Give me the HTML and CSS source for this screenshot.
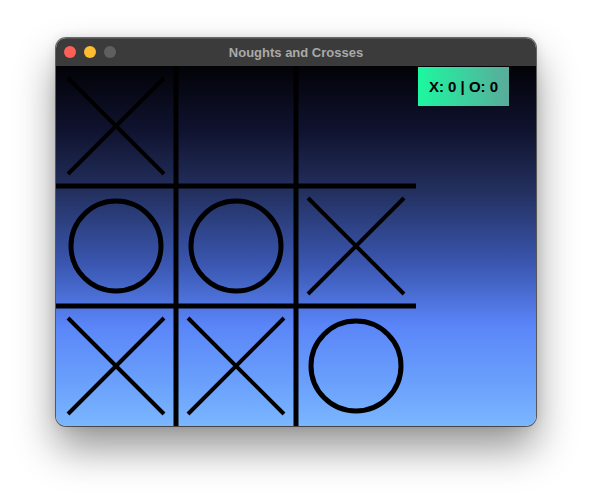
FILE: index.html
```html
<!DOCTYPE html>
<html>
<head>
<meta charset="utf-8">
<link rel="stylesheet" href="styles.css">
</head>
<body>
<div class="window">
  <div class="titlebar">
    <div class="lights">
      <span class="light red"></span>
      <span class="light yellow"></span>
      <span class="light gray"></span>
    </div>
    <div class="title">Noughts and Crosses</div>
  </div>
  <div class="content">
    <svg class="board" width="360" height="360" viewBox="0 0 360 360">
      <g stroke="#000" stroke-width="5">
        <line x1="120" y1="0" x2="120" y2="360"/>
        <line x1="240" y1="0" x2="240" y2="360"/>
        <line x1="0" y1="120" x2="361" y2="120"/>
        <line x1="0" y1="240" x2="361" y2="240"/>
      </g>
      <g stroke="#000" stroke-width="4" fill="none">
        <!-- row 0 -->
        <path d="M12 12 L108 108 M108 12 L12 108"/>
        <!-- row 1 -->
        <circle cx="60" cy="180" r="45" stroke-width="5"/>
        <circle cx="180" cy="180" r="45" stroke-width="5"/>
        <path d="M252 132 L348 228 M348 132 L252 228"/>
        <!-- row 2 -->
        <path d="M12 252 L108 348 M108 252 L12 348"/>
        <path d="M132 252 L228 348 M228 252 L132 348"/>
        <circle cx="300" cy="300" r="45" stroke-width="5"/>
      </g>
    </svg>
    <div class="score">X: 0 | O: 0</div>
  </div>
</div>
</body>
</html>
```
FILE: styles.css
```css
html, body {
  margin: 0;
  padding: 0;
  background: #ffffff;
}
body {
  width: 592px;
  height: 500px;
  padding: 38px 56px 0 56px;
  box-sizing: border-box;
  font-family: "Liberation Sans", Arial, sans-serif;
}
.window {
  width: 480px;
  height: 388px;
  border-radius: 10px;
  overflow: hidden;
  display: flex;
  flex-direction: column;
  box-shadow: 0 0 0 1px rgba(0,0,0,0.55), 0 22px 40px rgba(0,0,0,0.42), 0 0 12px rgba(0,0,0,0.12);
}
.titlebar {
  height: 28px;
  flex: none;
  background: #3b3b3b;
  box-shadow: inset 0 1px 0 rgba(255,255,255,0.12);
  display: flex;
  align-items: center;
}
.lights {
  display: flex;
  gap: 8px;
  padding-left: 8px;
}
.light {
  width: 12px;
  height: 12px;
  border-radius: 50%;
  display: block;
}
.red { background: #fe5f57; }
.yellow { background: #febc2e; }
.gray { background: #5f5f5f; }
.title {
  flex: 1;
  text-align: center;
  margin-left: -60px;
  font-size: 13px;
  font-weight: bold;
  color: #a9a9a9;
}
.content {
  flex: 1;
  position: relative;
  background: linear-gradient(to bottom, #020207 0%, #10132f 18%, #23305f 35%, #3a56b0 55%, #5a85f8 72%, #6aa0fc 88%, #7bb6ff 100%);
}
.board {
  display: block;
}
.score {
  position: absolute;
  top: 1px;
  right: 27px;
  padding: 10px 0;
  width: 91px;
  text-align: center;
  font-size: 15px;
  line-height: 19px;
  font-weight: bold;
  color: #000;
  background: linear-gradient(to right, #1cf8a0, #5aab9b);
}
```
